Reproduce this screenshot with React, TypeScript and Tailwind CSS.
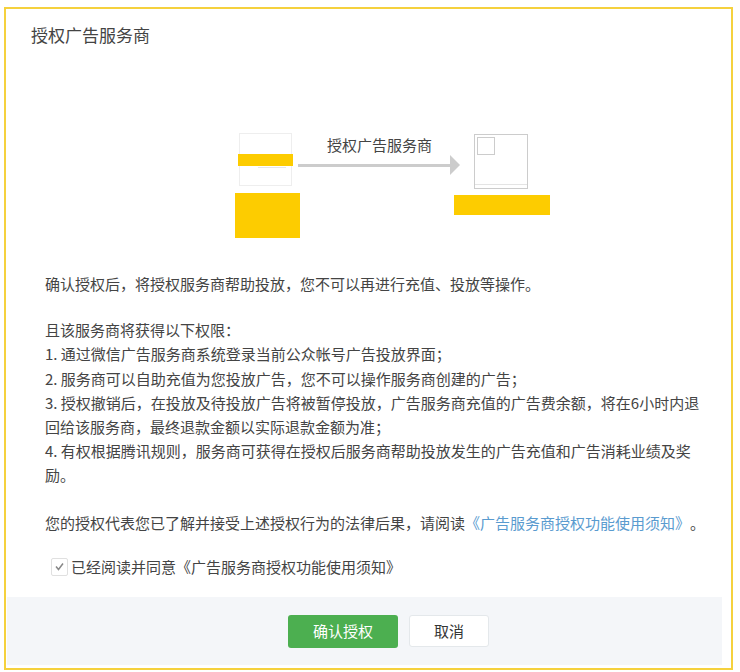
const cjk = "font-['Noto_Sans_CJK_SC',sans-serif] [text-spacing-trim:space-all]";

const rules = [
  "1. 通过微信广告服务商系统登录当前公众帐号广告投放界面；",
  "2. 服务商可以自助充值为您投放广告，您不可以操作服务商创建的广告；",
  "3. 授权撤销后，在投放及待投放广告将被暂停投放，广告服务商充值的广告费余额，将在6小时内退回给该服务商，最终退款金额以实际退款金额为准；",
  "4. 有权根据腾讯规则，服务商可获得在授权后服务商帮助投放发生的广告充值和广告消耗业绩及奖励。",
];

function Diagram() {
  return (
    <div className="ml-[229px] flex items-start">
      <div className="w-[65px] shrink-0">
        <div className="relative ml-[4px] flex h-[53px] w-[53px] items-center border border-[#eeeeee]">
          <div className="-ml-[2px] h-[12px] w-[55px] shrink-0 bg-[#fdcc00]" />
          {/* bits of the covered logo that stick out */}
          <div className="absolute left-[18px] top-[33px] h-px w-[28px] bg-[#e6e6e6]" />
        </div>
        <div className="mt-[7px] h-[45px] w-[65px] bg-[#fdcc00]" />
      </div>
      <div className="-ml-[2px] w-[162px] shrink-0">
        <p className="pl-[29px] text-[15px] leading-[24px] text-[#444444]">授权广告服务商</p>
        <div className="-mt-[2px] flex items-center">
          <div className="h-[3px] w-[152px] bg-[#cccccc]" />
          <div className="h-0 w-0 border-y-[10px] border-l-[10px] border-y-transparent border-l-[#cccccc]" />
        </div>
      </div>
      <div className="-ml-[6px] mt-[1px] w-[96px] shrink-0">
        <div className="ml-[20px] flex h-[55px] w-[54px] flex-col justify-between border border-[#cccccc] pb-[3px] pl-[2px] pt-[2px]">
          <div className="h-[18px] w-[18px] border border-[#cccccc]" />
          <div className="-ml-[2px] h-px bg-[#e4e4e4]" />
        </div>
        <div className="mt-[6px] h-[20px] w-[96px] bg-[#fdcc00]" />
      </div>
    </div>
  );
}

export default function App() {
  return (
    <div className={`${cjk} h-[672px] w-[740px] bg-white pb-[2px] pl-[4px] pr-[7px] pt-[7px]`}>
      <div className="flex h-full flex-col border-2 border-[#f5d13d]">
        <h1 className="pl-[25px] pt-[14px] text-[17px] leading-[24px] text-[#444444]">授权广告服务商</h1>

        <div className="mt-[86px]">
          <Diagram />
        </div>

        <div className="mt-[34px] pl-[39px] pr-[23px] text-[15px] leading-[24.2px] text-[#444444]">
          <p>确认授权后，将授权服务商帮助投放，您不可以再进行充值、投放等操作。</p>
          <p className="mt-[22px]">且该服务商将获得以下权限：</p>
          {rules.map((rule) => (
            <p key={rule}>{rule}</p>
          ))}
          <p className="mt-[23px]">
            您的授权代表您已了解并接受上述授权行为的法律后果，请阅读
            <span className="text-[#5a9bcf]">《广告服务商授权功能使用须知》</span>。
          </p>
          <label className="mt-[20px] flex items-center gap-[3px] pl-[6px]">
            <span className="flex h-[18px] w-[17px] items-center justify-center rounded-[2px] border border-[#e0e0e0] bg-white">
              <svg width="11" height="11" viewBox="0 0 11 11" fill="none" stroke="#888888" strokeWidth="1.5">
                <path d="M2 5.5 L4.5 8.5 L9 2.5" />
              </svg>
            </span>
            已经阅读并同意《广告服务商授权功能使用须知》
          </label>
        </div>

        <div className="mb-[3px] ml-[1px] mr-[9px] mt-auto flex h-[68px] items-center justify-center gap-[11px] bg-[#f4f6f9] pl-[48px]">
          <button className="h-[33px] w-[110px] rounded-[3px] bg-[#4caf50] text-[15px] text-white">确认授权</button>
          <button className="h-[32px] w-[80px] rounded-[3px] border border-[#e4e8eb] bg-white text-[15px] text-[#353535]">取消</button>
        </div>
      </div>
    </div>
  );
}
